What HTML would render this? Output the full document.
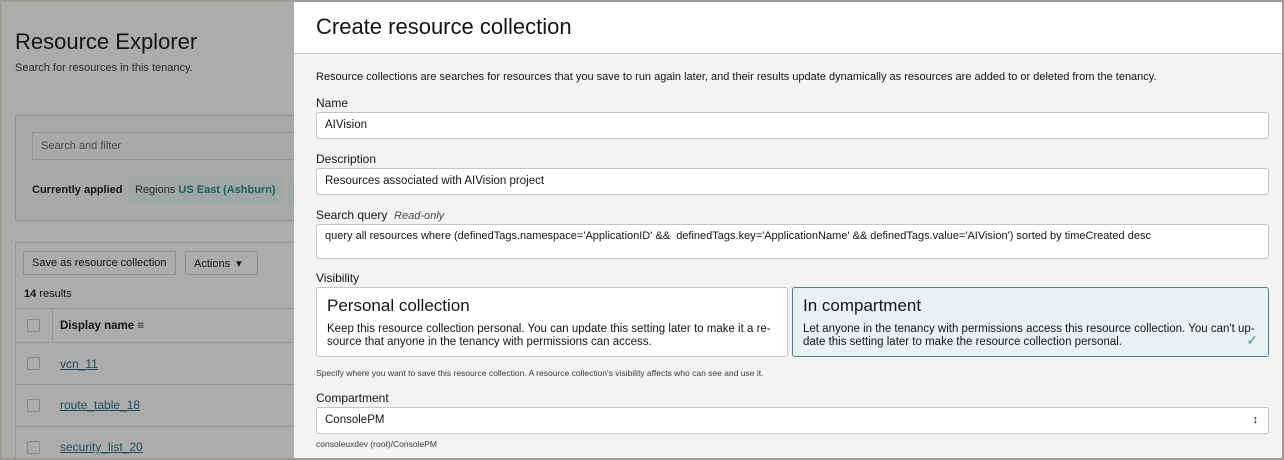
<!DOCTYPE html><html><head><style>
*{margin:0;padding:0;box-sizing:border-box}
body{width:1284px;height:460px;overflow:hidden;font-family:"Liberation Sans",sans-serif;background:#9e9a96;position:relative}
.a{position:absolute;white-space:nowrap}
#left{position:absolute;left:2px;top:2px;width:292px;height:456px;background:#adacaa;overflow:hidden}
#panel{position:absolute;left:294px;top:2px;width:988px;height:456px;background:#f4f3f2;overflow:hidden}
.inp{position:absolute;left:22px;width:953px;background:#fff;border:1px solid #c9c6c2;border-radius:3px;font-size:11.5px;color:#161513;padding-left:8px}
.lbl{position:absolute;left:22px;font-size:12px;color:#161513}
.card{position:absolute;top:285px;height:70px;border:1px solid #c9c6c2;border-radius:3px;background:#fff;padding:8px 10px}
.card h3{font-weight:normal;font-size:17px;color:#161513;margin-bottom:7px}
.card p{font-size:11.5px;line-height:13px;color:#161513}
.chk{position:absolute;left:25px;width:13px;height:13px;border:1px solid #8a8884;border-radius:2px}
.lnk{position:absolute;left:58px;font-size:12px;color:#1e4f62;text-decoration:underline}
</style></head><body>
<div id="left">
<div class="a" style="left:13px;top:27px;font-size:22px;color:#161513">Resource Explorer</div>
<div class="a" style="left:13px;top:60px;font-size:11px;color:#2b2a28">Search for resources in this tenancy.</div>
<div style="position:absolute;left:13px;top:113px;width:290px;height:106px;border:1px solid #8f8d8a;background:#aaa9a7"></div>
<div style="position:absolute;left:30px;top:130px;width:270px;height:28px;border:1px solid #959390;border-radius:2px"></div>
<div class="a" style="left:39px;top:138px;font-size:11px;color:#4a4946">Search and filter</div>
<div class="a" style="left:30px;top:182px;font-size:11px;font-weight:bold;color:#161513">Currently applied</div>
<div style="position:absolute;left:126px;top:175px;width:156px;height:27px;background:#9fa7a7;border-radius:3px"></div>
<div style="position:absolute;left:286px;top:175px;width:10px;height:27px;background:#9fa7a7"></div>
<div class="a" style="left:133px;top:182px;font-size:11px;color:#2b2a28">Regions <b style="color:#1f5e5c">US East (Ashburn)</b></div>
<div style="position:absolute;left:13px;top:240px;width:290px;height:220px;border-top:1px solid #989693;border-left:1px solid #989693"></div>
<div style="position:absolute;left:21px;top:249px;width:153px;height:24px;border:1px solid #8f8d8a;border-radius:2px"></div>
<div class="a" style="left:30px;top:255px;font-size:11px;color:#161513">Save as resource collection</div>
<div style="position:absolute;left:183px;top:249px;width:73px;height:24px;border:1px solid #8f8d8a;border-radius:2px"></div>
<div class="a" style="left:192px;top:255px;font-size:11px;color:#161513">Actions &nbsp;&#9662;</div>
<div class="a" style="left:22px;top:286px;font-size:11px;color:#161513"><b>14</b> results</div>
<div style="position:absolute;left:14px;top:306px;width:290px;border-top:1px solid #989693"></div>
<div style="position:absolute;left:50px;top:307px;height:34px;border-left:1px solid #989693"></div>
<div class="chk" style="top:317px"></div>
<div class="a" style="left:58px;top:318px;font-size:11.5px;font-weight:bold;color:#161513">Display name &#8801;</div>
<div style="position:absolute;left:14px;top:340px;width:290px;border-top:1px solid #989693"></div>
<div class="chk" style="top:355px"></div><div class="lnk" style="top:355px">vcn_11</div>
<div style="position:absolute;left:14px;top:382px;width:290px;border-top:1px solid #989693"></div>
<div class="chk" style="top:397px"></div><div class="lnk" style="top:396px">route_table_18</div>
<div style="position:absolute;left:14px;top:424px;width:290px;border-top:1px solid #989693"></div>
<div class="chk" style="top:439px"></div><div class="lnk" style="top:438px">security_list_20</div>
</div>
<div id="panel">
<div style="position:absolute;left:0;top:0;width:988px;height:52px;background:#fff;border-bottom:1px solid #c9c6c2"></div>
<div class="a" style="left:22px;top:12px;font-size:22px;color:#161513">Create resource collection</div>
<div class="a" style="left:22px;top:69px;font-size:11px;color:#161513">Resource collections are searches for resources that you save to run again later, and their results update dynamically as resources are added to or deleted from the tenancy.</div>
<div class="lbl" style="top:94px">Name</div>
<div class="inp" style="top:110px;height:27px;line-height:25px">AIVision</div>
<div class="lbl" style="top:150px">Description</div>
<div class="inp" style="top:166px;height:27px;line-height:25px">Resources associated with AIVision project</div>
<div class="lbl" style="top:206px">Search query &nbsp;<i style="font-size:11px;color:#4a4946">Read-only</i></div>
<div class="inp" style="top:222px;height:35px;line-height:22px;padding-top:0;font-size:11px">query all resources where (definedTags.namespace='ApplicationID' &amp;&amp; &nbsp;definedTags.key='ApplicationName' &amp;&amp; definedTags.value='AIVision') sorted by timeCreated desc</div>
<div class="lbl" style="top:269px">Visibility</div>
<div class="card" style="left:22px;width:472px"><h3>Personal collection</h3><p>Keep this resource collection personal. You can update this setting later to make it a re-<br>source that anyone in the tenancy with permissions can access.</p></div>
<div class="card" style="left:498px;width:477px;background:#e7f2f5;border-color:#4b8191"><h3>In compartment</h3><p>Let anyone in the tenancy with permissions access this resource collection. You can't up-<br>date this setting later to make the resource collection personal.</p>
<div class="a" style="right:10px;top:44px;color:#4b8fa6;font-size:14px">&#10003;</div></div>
<div class="a" style="left:22px;top:366px;font-size:8.5px;color:#3a3936">Specify where you want to save this resource collection. A resource collection's visibility affects who can see and use it.</div>
<div class="lbl" style="top:389px">Compartment</div>
<div class="inp" style="top:405px;height:27px;line-height:25px">ConsolePM<span style="position:absolute;right:10px;top:0;font-size:11px">&#8597;</span></div>
<div class="a" style="left:22px;top:437px;font-size:8.5px;color:#3a3936">consoleuxdev (root)/ConsolePM</div>
</div>
</body></html>
